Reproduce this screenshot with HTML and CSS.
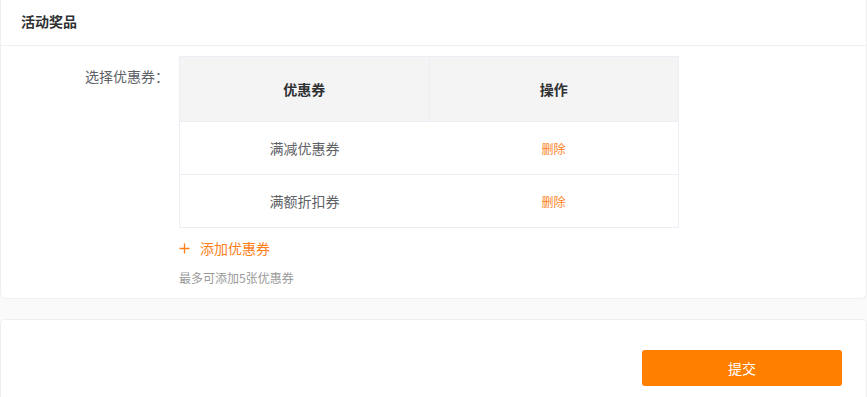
FILE: index.html
```html
<!DOCTYPE html>
<html lang="zh">
<head>
<meta charset="utf-8">
<link rel="stylesheet" href="styles.css">
</head>
<body>
<div class="card prize">
  <div class="card-head">活动奖品</div>
  <div class="card-body">
    <div class="form-row">
      <div class="label">选择优惠券：</div>
      <div class="field">
        <table class="tbl">
          <thead>
            <tr><th>优惠券</th><th>操作</th></tr>
          </thead>
          <tbody>
            <tr><td>满减优惠券</td><td><span class="del">删除</span></td></tr>
            <tr><td>满额折扣券</td><td><span class="del">删除</span></td></tr>
          </tbody>
        </table>
        <div class="add"><svg class="plus" width="11" height="11" viewBox="0 0 11 11"><path d="M5.5 0.5V10.5M0.5 5.5H10.5" stroke="currentColor" stroke-width="1.3" fill="none"/></svg><span>添加优惠券</span></div>
        <div class="hint">最多可添加5张优惠券</div>
      </div>
    </div>
  </div>
</div>
<div class="card footer">
  <button class="submit">提交</button>
</div>
</body>
</html>
```
FILE: styles.css
```css
html, body {
  margin: 0;
  padding: 0;
  background: #fafafa;
  font-family: "Noto Sans CJK SC", "Noto Sans", sans-serif;
  color: #333;
}
.card {
  background: #fff;
  border: 1px solid #efefef;
}
.prize {
  border-top: none;
  border-radius: 0 0 6px 6px;
}
.card-head {
  box-sizing: border-box;
  height: 46px;
  line-height: 42px;
  padding-left: 20px;
  font-size: 14px;
  font-weight: bold;
  color: #303133;
  border-bottom: 1px solid #efefef;
}
.card-body {
  padding: 10px 0 12px;
}
.form-row {
  display: flex;
  gap: 10px;
}
.label {
  width: 168px;
  text-align: right;
  font-size: 14px;
  line-height: 40px;
  color: #606266;
  flex: none;
}
.field {
  display: flex;
  flex-direction: column;
}
.tbl {
  width: 500px;
  border-collapse: collapse;
  table-layout: fixed;
  font-size: 14px;
}
.tbl th, .tbl td {
  border: 1px solid #ebeef5;
  text-align: center;
  padding: 0;
}
.tbl th {
  background: #f4f4f5;
  height: 64px;
  font-weight: bold;
  color: #303133;
}
.tbl td {
  height: 52px;
  color: #606266;
  border-left: none;
  border-right: none;
}
.tbl td:first-child { border-left: 1px solid #ebeef5; }
.tbl td:last-child { border-right: 1px solid #ebeef5; }
.del {
  color: #ff7f1a;
  font-size: 12px;
}
.add {
  margin-top: 10px;
  line-height: 20px;
  font-size: 14px;
  color: #ff7f1a;
  display: flex;
  align-items: center;
  gap: 10px;
}
.plus {
  flex: none;
}
.hint {
  margin-top: 11px;
  font-size: 12px;
  line-height: 17px;
  color: #999;
}
.footer {
  margin-top: 20px;
  border-radius: 4px 4px 0 0;
  height: 120px;
  display: flex;
  justify-content: flex-end;
  align-items: flex-start;
  padding-top: 30px;
  padding-right: 24px;
  box-sizing: border-box;
}
.submit {
  width: 200px;
  height: 36px;
  background: #ff8000;
  border: none;
  border-radius: 3px;
  color: #fff;
  font-size: 14px;
  font-family: inherit;
}
```
